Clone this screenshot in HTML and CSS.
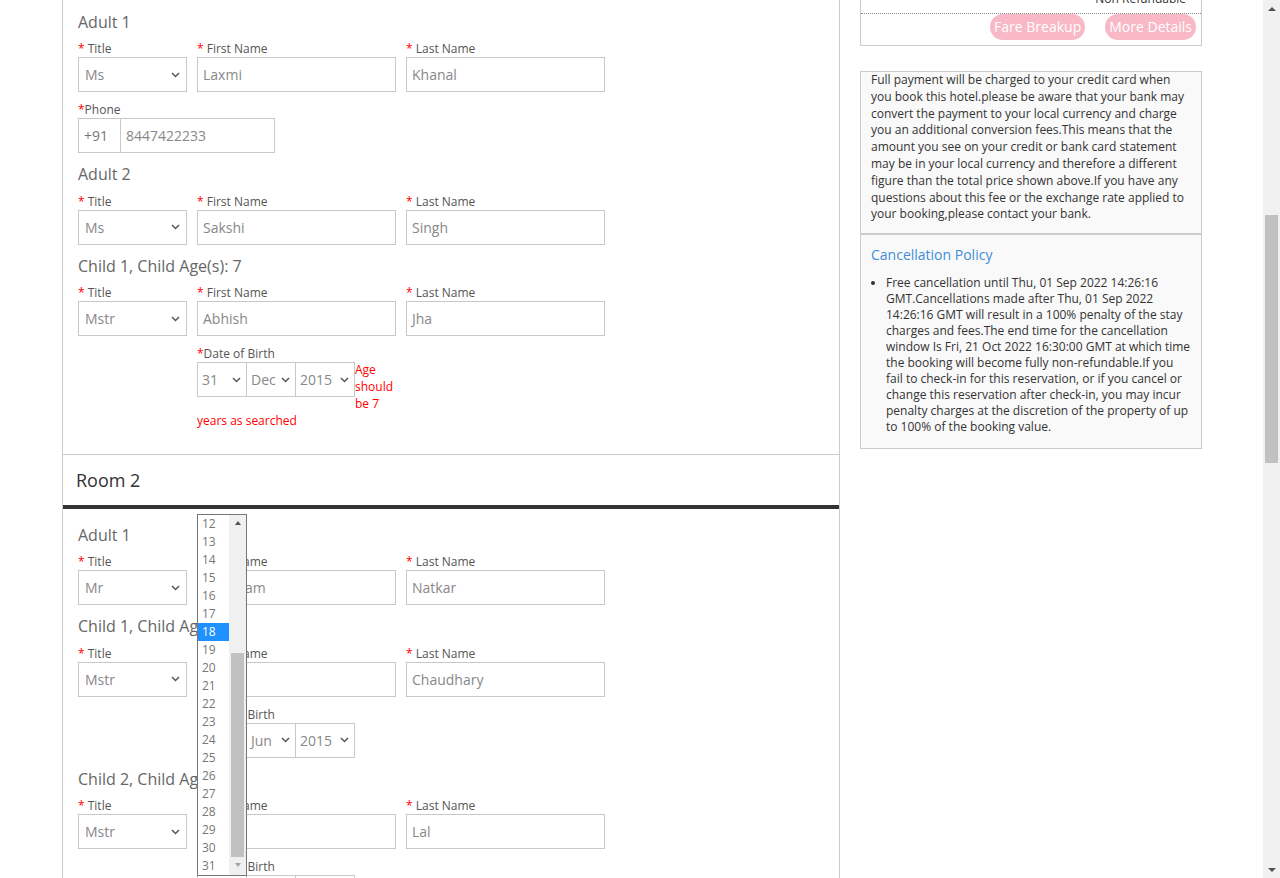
FILE: index.html
```html
<!DOCTYPE html>
<html lang="en">
<head>
<meta charset="utf-8">
<title>Guest Details</title>
<link rel="stylesheet" href="styles.css">
</head>
<body>
<div class="viewport">
  <div class="page">
    <main class="left-col">
      <section class="room room-1">
        <div class="room-body">
          <h3 class="guest-heading">Adult 1</h3>
          <div class="row">
            <div class="field f-title">
              <div class="lbl"><span class="req">*</span> Title</div>
              <div class="select"><span>Ms</span><svg class="chev" width="9" height="6" viewBox="0 0 9 6"><path d="M1 1l3.5 3.5L8 1" fill="none" stroke="#555" stroke-width="1.5"/></svg></div>
            </div>
            <div class="field f-name">
              <div class="lbl"><span class="req">*</span> First Name</div>
              <div class="input">Laxmi</div>
            </div>
            <div class="field f-name">
              <div class="lbl"><span class="req">*</span> Last Name</div>
              <div class="input">Khanal</div>
            </div>
          </div>
          <div class="row">
            <div class="field">
              <div class="lbl"><span class="req">*</span>Phone</div>
              <div class="phone"><span class="cc">+91</span><span class="num">8447422233</span></div>
            </div>
          </div>

          <h3 class="guest-heading">Adult 2</h3>
          <div class="row">
            <div class="field f-title">
              <div class="lbl"><span class="req">*</span> Title</div>
              <div class="select"><span>Ms</span><svg class="chev" width="9" height="6" viewBox="0 0 9 6"><path d="M1 1l3.5 3.5L8 1" fill="none" stroke="#555" stroke-width="1.5"/></svg></div>
            </div>
            <div class="field f-name">
              <div class="lbl"><span class="req">*</span> First Name</div>
              <div class="input">Sakshi</div>
            </div>
            <div class="field f-name">
              <div class="lbl"><span class="req">*</span> Last Name</div>
              <div class="input">Singh</div>
            </div>
          </div>

          <h3 class="guest-heading">Child 1, Child Age(s): 7</h3>
          <div class="row">
            <div class="field f-title">
              <div class="lbl"><span class="req">*</span> Title</div>
              <div class="select"><span>Mstr</span><svg class="chev" width="9" height="6" viewBox="0 0 9 6"><path d="M1 1l3.5 3.5L8 1" fill="none" stroke="#555" stroke-width="1.5"/></svg></div>
            </div>
            <div class="field f-name">
              <div class="lbl"><span class="req">*</span> First Name</div>
              <div class="input">Abhish</div>
            </div>
            <div class="field f-name">
              <div class="lbl"><span class="req">*</span> Last Name</div>
              <div class="input">Jha</div>
            </div>
          </div>
          <div class="row">
            <div class="spacer"></div>
            <div class="field f-name f-dob">
              <div class="lbl"><span class="req">*</span>Date of Birth</div>
              <div class="dob">
                <div class="dsel d-day"><span>31</span><svg class="chev" width="9" height="6" viewBox="0 0 9 6"><path d="M1 1l3.5 3.5L8 1" fill="none" stroke="#555" stroke-width="1.5"/></svg></div>
                <div class="dsel d-mon"><span>Dec</span><svg class="chev" width="9" height="6" viewBox="0 0 9 6"><path d="M1 1l3.5 3.5L8 1" fill="none" stroke="#555" stroke-width="1.5"/></svg></div>
                <div class="dsel d-year"><span>2015</span><svg class="chev" width="9" height="6" viewBox="0 0 9 6"><path d="M1 1l3.5 3.5L8 1" fill="none" stroke="#555" stroke-width="1.5"/></svg></div>
              </div>
              <div class="err">Age should be 7 years as searched</div>
            </div>
          </div>
        </div>
      </section>

      <section class="room room-2">
        <h2 class="room-head">Room 2</h2>
        <div class="room-body">
          <h3 class="guest-heading">Adult 1</h3>
          <div class="row">
            <div class="field f-title">
              <div class="lbl"><span class="req">*</span> Title</div>
              <div class="select"><span>Mr</span><svg class="chev" width="9" height="6" viewBox="0 0 9 6"><path d="M1 1l3.5 3.5L8 1" fill="none" stroke="#555" stroke-width="1.5"/></svg></div>
            </div>
            <div class="field f-name">
              <div class="lbl"><span class="req">*</span> First Name</div>
              <div class="input">Shubham</div>
            </div>
            <div class="field f-name">
              <div class="lbl"><span class="req">*</span> Last Name</div>
              <div class="input">Natkar</div>
            </div>
          </div>

          <h3 class="guest-heading">Child 1, Child Age(s): 7</h3>
          <div class="row">
            <div class="field f-title">
              <div class="lbl"><span class="req">*</span> Title</div>
              <div class="select"><span>Mstr</span><svg class="chev" width="9" height="6" viewBox="0 0 9 6"><path d="M1 1l3.5 3.5L8 1" fill="none" stroke="#555" stroke-width="1.5"/></svg></div>
            </div>
            <div class="field f-name">
              <div class="lbl"><span class="req">*</span> First Name</div>
              <div class="input">Ravi</div>
            </div>
            <div class="field f-name">
              <div class="lbl"><span class="req">*</span> Last Name</div>
              <div class="input">Chaudhary</div>
            </div>
          </div>
          <div class="row">
            <div class="spacer"></div>
            <div class="field f-name f-dob">
              <div class="lbl"><span class="req">*</span>Date of Birth</div>
              <div class="dob">
                <div class="dsel d-day"><span>18</span><svg class="chev" width="9" height="6" viewBox="0 0 9 6"><path d="M1 1l3.5 3.5L8 1" fill="none" stroke="#555" stroke-width="1.5"/></svg></div>
                <div class="dsel d-mon"><span>Jun</span><svg class="chev" width="9" height="6" viewBox="0 0 9 6"><path d="M1 1l3.5 3.5L8 1" fill="none" stroke="#555" stroke-width="1.5"/></svg></div>
                <div class="dsel d-year"><span>2015</span><svg class="chev" width="9" height="6" viewBox="0 0 9 6"><path d="M1 1l3.5 3.5L8 1" fill="none" stroke="#555" stroke-width="1.5"/></svg></div>
              </div>
            </div>
          </div>

          <h3 class="guest-heading">Child 2, Child Age(s): 7</h3>
          <div class="row">
            <div class="field f-title">
              <div class="lbl"><span class="req">*</span> Title</div>
              <div class="select"><span>Mstr</span><svg class="chev" width="9" height="6" viewBox="0 0 9 6"><path d="M1 1l3.5 3.5L8 1" fill="none" stroke="#555" stroke-width="1.5"/></svg></div>
            </div>
            <div class="field f-name">
              <div class="lbl"><span class="req">*</span> First Name</div>
              <div class="input">Aman</div>
            </div>
            <div class="field f-name">
              <div class="lbl"><span class="req">*</span> Last Name</div>
              <div class="input">Lal</div>
            </div>
          </div>
          <div class="row">
            <div class="spacer"></div>
            <div class="field f-name f-dob">
              <div class="lbl"><span class="req">*</span>Date of Birth</div>
              <div class="dob">
                <div class="dsel d-day open"><span>18</span><svg class="chev" width="9" height="6" viewBox="0 0 9 6"><path d="M1 1l3.5 3.5L8 1" fill="none" stroke="#555" stroke-width="1.5"/></svg>
                  <div class="popup">
                    <ul class="opts">
                      <li>12</li><li>13</li><li>14</li><li>15</li><li>16</li><li>17</li>
                      <li class="sel">18</li><li>19</li><li>20</li><li>21</li><li>22</li><li>23</li>
                      <li>24</li><li>25</li><li>26</li><li>27</li><li>28</li><li>29</li><li>30</li><li>31</li>
                    </ul>
                    <div class="pop-sb">
                      <span class="arr-up"></span>
                      <span class="pop-thumb"></span>
                      <span class="arr-down"></span>
                    </div>
                  </div>
                </div>
                <div class="dsel d-mon"><span>Jan</span><svg class="chev" width="9" height="6" viewBox="0 0 9 6"><path d="M1 1l3.5 3.5L8 1" fill="none" stroke="#555" stroke-width="1.5"/></svg></div>
                <div class="dsel d-year"><span>2015</span><svg class="chev" width="9" height="6" viewBox="0 0 9 6"><path d="M1 1l3.5 3.5L8 1" fill="none" stroke="#555" stroke-width="1.5"/></svg></div>
              </div>
            </div>
          </div>
        </div>
      </section>
    </main>

    <aside class="right-col">
      <div class="fare-box">
        <div class="fare-note">Non Refundable</div>
        <div class="fare-actions">
          <a class="pill">Fare Breakup</a>
          <a class="pill">More Details</a>
        </div>
      </div>
      <div class="info-box">
        <p>Full payment will be charged to your credit card when you book this hotel.please be aware that your bank may convert the payment to your local currency and charge you an additional conversion fees.This means that the amount you see on your credit or bank card statement may be in your local currency and therefore a different figure than the total price shown above.If you have any questions about this fee or the exchange rate applied to your booking,please contact your bank.</p>
      </div>
      <div class="policy-box">
        <h4 class="policy-title">Cancellation Policy</h4>
        <ul class="policy-list">
          <li>Free cancellation until Thu, 01 Sep 2022 14:26:16 GMT.Cancellations made after Thu, 01 Sep 2022 14:26:16 GMT will result in a 100% penalty of the stay charges and fees.The end time for the cancellation window Is Fri, 21 Oct 2022 16:30:00 GMT at which time the booking will become fully non-refundable.If you fail to check-in for this reservation, or if you cancel or change this reservation after check-in, you may incur penalty charges at the discretion of the property of up to 100% of the booking value.</li>
        </ul>
      </div>
    </aside>
  </div>

  <div class="scrollbar">
    <span class="sb-btn"><span class="sb-up"></span></span>
    <span class="sb-track"><span class="sb-thumb"></span></span>
    <span class="sb-btn"><span class="sb-down"></span></span>
  </div>
</div>
</body>
</html>
```

FILE: styles.css
```css
* { box-sizing: border-box; }
html, body { margin: 0; padding: 0; }
body {
  font-family: "Open Sans", "Liberation Sans", Arial, sans-serif;
  background: #fff;
  color: #555;
  overflow: hidden;
}

.viewport { display: flex; height: 878px; overflow: hidden; }
.page {
  flex: 1;
  display: flex;
  align-items: flex-start;
  gap: 20px;
  padding-left: 62px;
  overflow: hidden;
}

/* ---------- left column ---------- */
.left-col { width: 778px; flex: none; }
.room {
  border: 1px solid #ccc;
  border-top: none;
  background: #fff;
}
.room-2 { border-bottom: none; }
.room-body { padding: 0 15px; }
.room-1 .room-body { padding-top: 9.5px; padding-bottom: 16px; }
.room-2 .room-body { padding-top: 13.5px; }

.room-head {
  margin: 0;
  height: 54px;
  line-height: 50px;
  padding-left: 13px;
  font-size: 18px;
  font-weight: 400;
  color: #333;
  border-bottom: 4px solid #333;
}

.guest-heading {
  margin: 0 0 6.5px;
  font-size: 16px;
  line-height: 24px;
  font-weight: 400;
  color: #666;
}

.row { display: flex; gap: 10px; margin-bottom: 9px; }
.spacer { width: 109px; flex: none; }
.field { flex: none; }
.f-title { width: 109px; }
.f-name { width: 199px; }

.lbl {
  font-size: 12px;
  line-height: 17px;
  color: #555;
}
.req { color: #f00; }

.input, .select {
  height: 35px;
  border: 1px solid #c8c8c8;
  display: flex;
  align-items: center;
  font-size: 14px;
  color: #888;
  background: #fff;
}
.input { padding-left: 5px; }
.select { padding: 0 6px 0 6px; justify-content: space-between; }
.chev { display: block; flex: none; }

.phone {
  width: 197px;
  height: 35px;
  border: 1px solid #c8c8c8;
  display: flex;
  font-size: 14px;
  color: #888;
}
.phone .cc {
  width: 42px;
  border-right: 1px solid #c8c8c8;
  padding-left: 5px;
  display: flex;
  align-items: center;
  color: #777;
}
.phone .num { padding-left: 5px; display: flex; align-items: center; }

.f-dob { display: flow-root; }
.dob { float: left; display: flex; }
.dsel {
  height: 35px;
  border: 1px solid #c8c8c8;
  display: flex;
  align-items: center;
  justify-content: space-between;
  padding: 0 5px 0 4px;
  font-size: 14px;
  color: #888;
  background: #fff;
}
.d-day { width: 50px; }
.d-mon { width: 50px; margin-left: -1px; }
.d-year { width: 60px; margin-left: -1px; }
.err {
  font-size: 12px;
  line-height: 17px;
  color: #f00;
  margin-top: -1px;
}

/* open native-like dropdown list */
.open { position: relative; }
.popup {
  position: absolute;
  left: -1px;
  bottom: 100%;
  width: 50px;
  height: 362px;
  border: 1px solid #767676;
  background: #fff;
  display: flex;
  z-index: 5;
}
.opts {
  list-style: none;
  margin: 0;
  padding: 0;
  flex: 1;
}
.opts li {
  height: 18px;
  line-height: 18px;
  font-size: 12px;
  padding-left: 4px;
  color: #777;
}
.opts li.sel { background: #1e90ff; color: #fff; }
.pop-sb {
  width: 17px;
  background: #f0f0f0;
  display: flex;
  flex-direction: column;
  align-items: center;
}
.arr-up, .arr-down {
  display: block;
  width: 0; height: 0;
  border-left: 3.5px solid transparent;
  border-right: 3.5px solid transparent;
  margin: 6px 0;
}
.arr-up { border-bottom: 4px solid #505050; }
.arr-down { border-top: 4px solid #a3a3a3; }
.pop-thumb {
  display: block;
  width: 13px;
  height: 204px;
  margin-top: 122px;
  background: #c1c1c1;
}

/* ---------- right column ---------- */
.right-col { width: 342px; flex: none; margin-top: -10px; }
.fare-box { border: 1px solid #ccc; background: #fff; }
.fare-note {
  font-size: 12px;
  line-height: 16px;
  text-align: right;
  padding: 0 15px 6px 0;
  color: #333;
}
.fare-actions {
  border-top: 1px dotted #888;
  display: flex;
  justify-content: flex-end;
  gap: 20px;
  padding: 0 5px 5px;
}
.pill {
  display: block;
  height: 26px;
  line-height: 26px;
  padding: 0 4px;
  border-radius: 13px;
  background: #f8b8c6;
  color: #fff;
  font-size: 14px;
  text-decoration: none;
}
.info-box {
  margin-top: 25px;
  border: 1px solid #ccc;
  background: #f9f9f9;
  padding: 0 10px 10px;
  font-size: 12px;
  line-height: 16.8px;
  color: #333;
}
.info-box p { margin: 0; }
.policy-box {
  border: 1px solid #ccc;
  background: #f9f9f9;
  padding: 10px 10px 0;
  color: #333;
}
.policy-title {
  margin: 0;
  font-size: 14px;
  line-height: 20px;
  font-weight: 400;
  color: #3f8ed8;
}
.policy-list {
  margin: 10px 0 0;
  padding: 0 0 13px 15px;
  font-size: 12px;
  line-height: 16px;
}

/* ---------- page scrollbar ---------- */
.scrollbar {
  width: 17px;
  flex: none;
  background: #f1f1f1;
  display: flex;
  flex-direction: column;
}
.sb-btn {
  height: 17px;
  display: flex;
  align-items: center;
  justify-content: center;
}
.sb-up, .sb-down {
  display: block;
  width: 0; height: 0;
  border-left: 4px solid transparent;
  border-right: 4px solid transparent;
}
.sb-up { border-bottom: 4px solid #505050; }
.sb-down { border-top: 4px solid #505050; }
.sb-track { flex: 1; display: flex; justify-content: center; }
.sb-thumb {
  display: block;
  width: 13px;
  height: 248px;
  margin-top: 198px;
  background: #c1c1c1;
}
```
